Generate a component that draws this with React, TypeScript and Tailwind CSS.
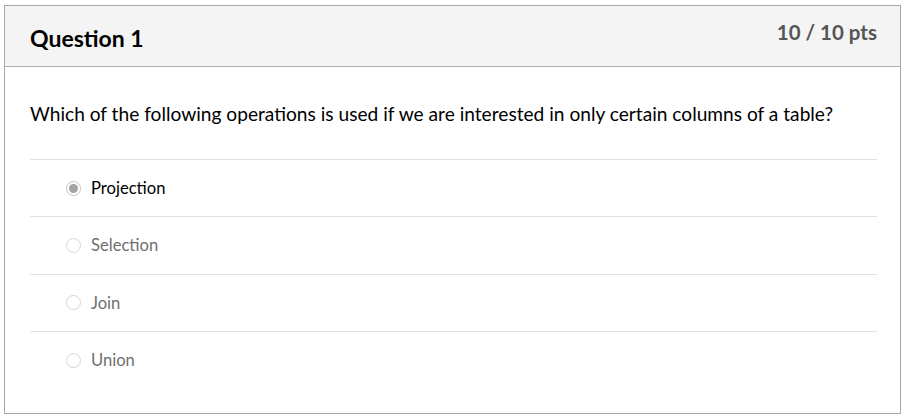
const answers = [
  { label: 'Projection', selected: true },
  { label: 'Selection', selected: false },
  { label: 'Join', selected: false },
  { label: 'Union', selected: false },
];

function Radio({ selected }: { selected: boolean }) {
  return (
    <span
      className={
        'flex h-[15px] w-[15px] shrink-0 items-center justify-center rounded-full border ' +
        (selected ? 'border-[#c4c4c4] bg-white' : 'border-[#d5d5d8] bg-white')
      }
    >
      {selected && <span className="h-[9px] w-[9px] rounded-full bg-[#a3a3a6]" />}
    </span>
  );
}

export default function App() {
  return (
    <div className="h-[419px] w-[908px] bg-white pl-[4px] pt-[5px] font-['Lato','Liberation_Sans',sans-serif]">
      <div className="h-[409px] w-[897px] border border-[#a8a8a8]">
        {/* header */}
        <div className="flex h-[61px] items-start justify-between border-b border-[#b0b0b0] bg-[#f4f4f4] pl-[25px] pr-[23px]">
          <h2 className="pt-[18px] text-[23px] leading-[28px] font-bold text-black">Question 1</h2>
          <span className="pt-[13px] text-[20.5px] leading-[26px] font-bold text-[#555555]">10 / 10 pts</span>
        </div>

        {/* body */}
        <div className="px-[25px] pt-[35px]">
          <p className="text-[19.15px] leading-[24px] text-black">
            Which of the following operations is used if we are interested in only certain columns of a table?
          </p>
          <div className="mt-[33px] w-[847px]">
            {answers.map((a) => (
              <div
                key={a.label}
                className="flex h-[57.4px] items-center gap-[10px] border-t border-[#e2e2e2] pl-[36px]"
              >
                <Radio selected={a.selected} />
                <span className={'text-[16.6px] ' + (a.selected ? 'text-black' : 'text-[#6f6f6f]')}>
                  {a.label}
                </span>
              </div>
            ))}
          </div>
        </div>
      </div>
    </div>
  );
}
